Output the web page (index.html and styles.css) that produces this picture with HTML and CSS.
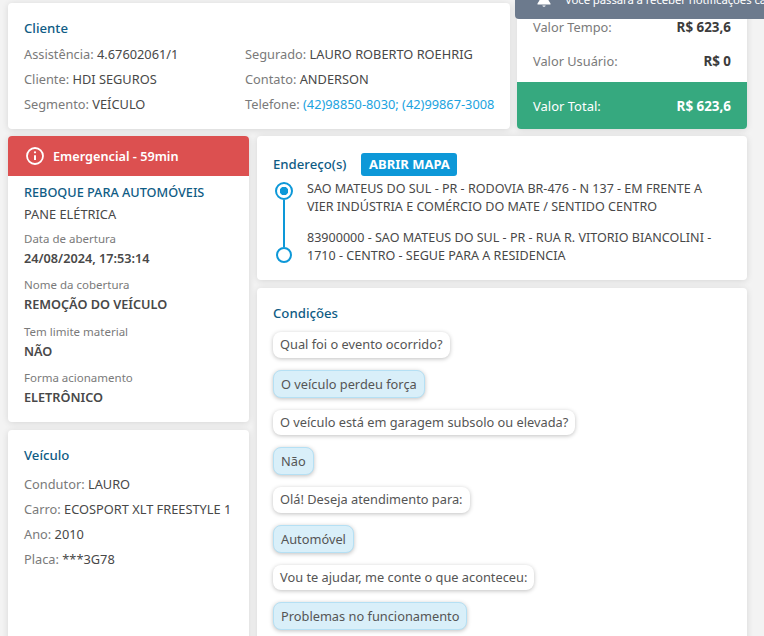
FILE: index.html
```html
<!DOCTYPE html>
<html lang="pt-BR">
<head>
<meta charset="utf-8">
<title>Atendimento</title>
<link rel="stylesheet" href="styles.css">
</head>
<body>
<div class="toast">
  <svg class="bell" width="16" height="16" viewBox="0 0 16 16"><path d="M8 0C5 0 3.400 2.200 3.400 5V8.500L1.500 11.500V12.500H14.500V11.500L12.600 8.500V5C12.600 2.200 11 0 8 0ZM6.300 13.500A1.800 1.800 0 0 0 9.700 13.500Z" fill="#fff"/></svg>
  <span>Você passará a receber notificações ca</span>
</div>
<main class="page">
  <section class="row-top">
    <div class="card client">
      <h2 class="title">Cliente</h2>
      <div class="client-grid">
        <p class="line"><span class="lbl">Assistência:</span> 4.67602061/1</p>
        <p class="line"><span class="lbl">Segurado:</span> LAURO ROBERTO ROEHRIG</p>
        <p class="line"><span class="lbl">Cliente:</span> HDI SEGUROS</p>
        <p class="line"><span class="lbl">Contato:</span> ANDERSON</p>
        <p class="line"><span class="lbl">Segmento:</span> VEÍCULO</p>
        <p class="line"><span class="lbl">Telefone:</span> <span class="link">(42)98850-8030; (42)99867-3008</span></p>
      </div>
    </div>
    <div class="card values">
      <div class="value-row"><span class="lbl">Valor Tempo:</span><b>R$ 623,6</b></div>
      <div class="value-row"><span class="lbl">Valor Usuário:</span><b>R$ 0</b></div>
      <div class="value-total"><span>Valor Total:</span><b>R$ 623,6</b></div>
    </div>
  </section>
  <section class="row-main">
    <div class="col-left">
      <div class="card service">
        <div class="alert">
          <svg width="20" height="20" viewBox="0 0 20 20" fill="none" stroke="#fff" stroke-width="1.800"><circle cx="10" cy="10" r="8"/><path d="M10 9.200V14" stroke-width="2"/><circle cx="10" cy="6.300" r="1.100" fill="#fff" stroke="none"/></svg>
          <span>Emergencial - 59min</span>
        </div>
        <div class="service-body">
          <h3 class="service-name">REBOQUE PARA AUTOMÓVEIS</h3>
          <p class="service-sub">PANE ELÉTRICA</p>
          <div class="field"><small>Data de abertura</small><b>24/08/2024, 17:53:14</b></div>
          <div class="field"><small>Nome da cobertura</small><b>REMOÇÃO DO VEÍCULO</b></div>
          <div class="field"><small>Tem limite material</small><b>NÃO</b></div>
          <div class="field"><small>Forma acionamento</small><b>ELETRÔNICO</b></div>
        </div>
      </div>
      <div class="card vehicle">
        <h2 class="title">Veículo</h2>
        <p class="line"><span class="lbl">Condutor:</span> LAURO</p>
        <p class="line"><span class="lbl">Carro:</span> ECOSPORT XLT FREESTYLE 1</p>
        <p class="line"><span class="lbl">Ano:</span> 2010</p>
        <p class="line"><span class="lbl">Placa:</span> ***3G78</p>
      </div>
    </div>
    <div class="col-right">
      <div class="card address">
        <div class="address-head">
          <h2 class="title">Endereço(s)</h2>
          <button class="map-btn">ABRIR MAPA</button>
        </div>
        <div class="route">
          <div class="route-line">
            <span class="dot dot-on"></span>
            <span class="stem"></span>
            <span class="dot"></span>
          </div>
          <div class="route-text">
            <p>SAO MATEUS DO SUL - PR - RODOVIA BR-476 - N 137 - EM FRENTE A VIER INDÚSTRIA E COMÉRCIO DO MATE / SENTIDO CENTRO</p>
            <p>83900000 - SAO MATEUS DO SUL - PR - RUA R. VITORIO BIANCOLINI - 1710 - CENTRO - SEGUE PARA A RESIDENCIA</p>
          </div>
        </div>
      </div>
      <div class="card conditions">
        <h2 class="title">Condições</h2>
        <div class="chat">
          <div class="bubble">Qual foi o evento ocorrido?</div>
          <div class="bubble answer">O veículo perdeu força</div>
          <div class="bubble">O veículo está em garagem subsolo ou elevada?</div>
          <div class="bubble answer">Não</div>
          <div class="bubble">Olá! Deseja atendimento para:</div>
          <div class="bubble answer">Automóvel</div>
          <div class="bubble">Vou te ajudar, me conte o que aconteceu:</div>
          <div class="bubble answer">Problemas no funcionamento</div>
        </div>
      </div>
    </div>
  </section>
</main>
</body>
</html>
```
FILE: styles.css
```css
* { box-sizing: border-box; }
html, body { margin: 0; height: 100%; overflow: hidden; }
body {
  background: #f3f3f3;
  font-family: "Noto Sans", "Liberation Sans", sans-serif;
  font-size: 12.800px;
  color: #484848;
  position: relative;
}
p, h2, h3 { margin: 0; }
.toast {
  position: absolute;
  top: 0; left: 515px; right: 0;
  height: 19px;
  background: #6c7a8d;
  border-radius: 0 0 0 4px;
  color: #fff;
  overflow: hidden;
  white-space: nowrap;
  z-index: 2;
  padding-left: 21px;
  display: flex;
  gap: 13px;
}
.toast span { font-size: 11.400px; line-height: 10px; letter-spacing: -.1px; margin-top: -5px; }
.bell { flex: none; margin-top: -8px; }
.page { width: 747px; padding-left: 8px; }
.card {
  background: #fff;
  border-radius: 4px;
  box-shadow: 0 1px 7px rgba(0,0,0,.12);
}
.row-top { display: flex; gap: 7px; padding-top: 3px; height: 129px; }
.client { width: 502px; padding: 16px 16px 0; }
.title { font-size: 13.200px; font-weight: 500; color: #0f5c85; line-height: 18px; }
.client-grid { display: grid; grid-template-columns: 221px 1fr; margin-top: 5px; }
.line { line-height: 25px; white-space: nowrap; }
.lbl { color: #7a7a7a; }
.link { color: #1ba3e0; }
.values { width: 230px; margin-top: -3px; display: flex; flex-direction: column; justify-content: flex-end; overflow: hidden; }
.value-row { display: flex; justify-content: space-between; padding: 0 16px; height: 34px; align-items: center; position: relative; top: -1px; }
.value-row b { font-weight: 700; color: #3c3c3c; font-size: 13.400px; }
.value-total {
  display: flex; justify-content: space-between; align-items: center;
  height: 47px; padding: 0 16px; margin-top: 3px;
  background: #36a97f; color: #fff; font-size: 13px;
}
.value-total b { font-size: 13.400px; }
.row-main { display: flex; gap: 8px; margin-top: 7px; align-items: flex-start; }
.col-left { width: 241px; display: flex; flex-direction: column; gap: 8px; }
.col-right { width: 490px; display: flex; flex-direction: column; gap: 8px; }
.alert {
  background: #dc5050; color: #fff; height: 40px; border-radius: 4px 4px 0 0;
  display: flex; align-items: center; gap: 8px; padding-left: 17px;
  font-weight: 600; font-size: 12.700px;
}
.service-body { padding: 7px 16px 15px; }
.service-name { font-size: 12.700px; font-weight: 500; color: #0f5c85; line-height: 18px; }
.service-sub { line-height: 18px; margin: 4px 0 -2px; }
.field { margin-top: 8.500px; display: flex; flex-direction: column; }
.field small { font-size: 11.500px; color: #7a7a7a; line-height: 17px; }
.field b { font-weight: 600; color: #484848; line-height: 20px; margin-top: 1px; font-size: 12.700px; }
.vehicle { padding: 16px 16px 0; height: 260px; }
.vehicle .title { margin-bottom: 8px; }
.address { padding: 16px 16px 0; height: 144px; }
.address-head { display: flex; align-items: center; gap: 15px; height: 24px; }
.map-btn {
  border: 0; border-radius: 3px; background: #0d98d8; color: #fff;
  font: 700 13px "Noto Sans", sans-serif; height: 23px; width: 96px; padding: 0;
}
.route { display: flex; gap: 12px; margin-top: 4px; }
.route-line { width: 22px; display: flex; flex-direction: column; align-items: center; padding-top: 2px; }
.dot { width: 16px; height: 16px; border-radius: 50%; border: 2px solid #0d98d8; background: #fff; flex: none; }
.dot-on { width: 18px; height: 18px; background: radial-gradient(circle, #0d98d8 0 4px, #fff 4.500px); }
.stem { width: 2px; height: 47px; background: #0d98d8; }
.route-text { width: 420px; font-size: 12.550px; }
.route-text p { line-height: 18px; margin-bottom: 13px; }
.conditions { padding: 16px 16px 0; height: 360px; }
.chat { display: flex; flex-direction: column; align-items: flex-start; gap: 12px; margin-top: 10px; }
.bubble { background: #fff; color: #555; border-radius: 8px; box-shadow: 0 1px 4px rgba(0,0,0,.25); padding: 0 7px; height: 25.500px; line-height: 25px; white-space: nowrap; }
.answer { background: #d9eff9; border: 1px solid #b5e0f4; height: 28px; line-height: 26px; }
```
